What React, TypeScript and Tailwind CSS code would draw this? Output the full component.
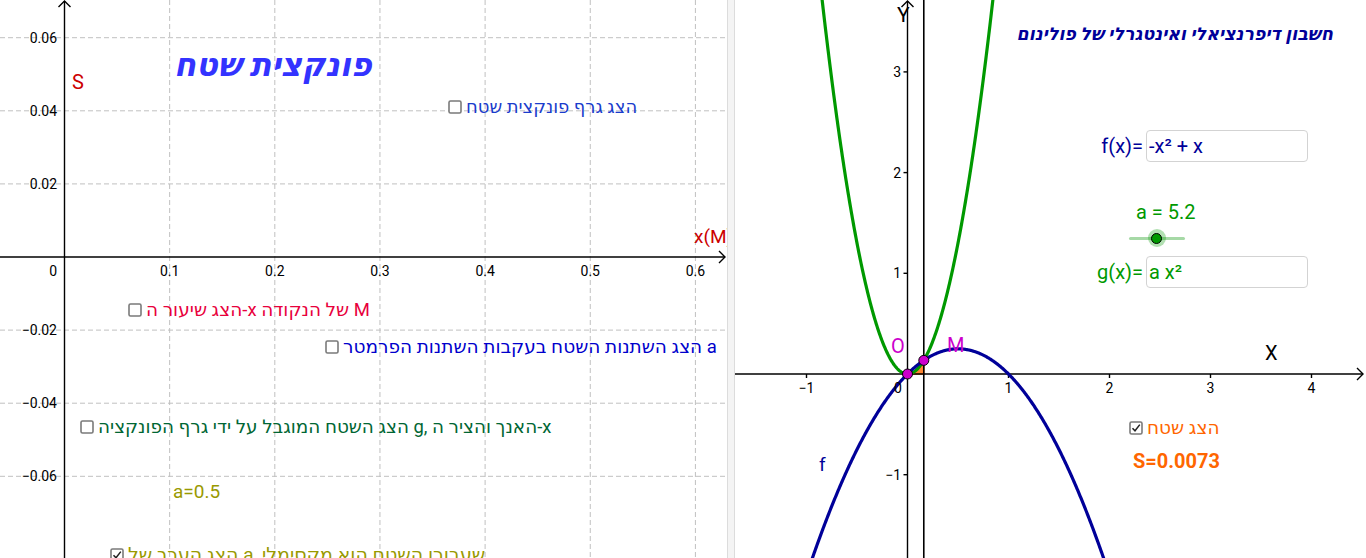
import React from 'react';

const FONT = "Roboto, 'DejaVu Sans', 'Liberation Sans', sans-serif";

// right view: world -> page pixels
const RX = (x: number) => 907.5 + 101 * x;
const RY = (y: number) => 374 - 100.7 * y;

const f = (x: number) => -x * x + x;
const a = 5.2;
const g = (x: number) => a * x * x;
const mx = 1 / (1 + a);

function curve(fn: (x: number) => number, from: number, to: number) {
    const pts: string[] = [];
    for (let x = from; x <= to + 1e-9; x += 0.005) {
        pts.push(`${RX(x).toFixed(2)},${RY(fn(x)).toFixed(2)}`);
    }
    return 'M' + pts.join(' L');
}

function areaPath() {
    const pts: string[] = [`${RX(0)},${RY(0)}`];
    for (let x = 0; x <= mx; x += mx / 20) {
        pts.push(`${RX(x).toFixed(2)},${RY(g(x)).toFixed(2)}`);
    }
    pts.push(`${RX(mx).toFixed(2)},${RY(0)}`);
    return 'M' + pts.join(' L') + ' Z';
}

function Box({ checked = false }: { checked?: boolean }) {
    return (
        <svg width="14" height="14" viewBox="0 0 14 14" className="shrink-0">
            <rect x="1" y="1" width="12" height="12" rx="1.5" fill="white" stroke="#7a7a7a" strokeWidth="1.6" />
            {checked && <path d="M3.5 7.2 L6 9.8 L10.8 3.6" fill="none" stroke="#222" strokeWidth="1.5" />}
        </svg>
    );
}

function LeftView() {
    const xs = [1, 2, 3, 4, 5, 6].map((k) => 64.5 + k * 105.15);
    const ys = [-3, -2, -1, 1, 2, 3, 4].map((k) => 257 - k * 73.1);
    const yLabels: [number, string][] = [
        [3, '0.06'],
        [2, '0.04'],
        [1, '0.02'],
        [-1, '\u22120.02'],
        [-2, '\u22120.04'],
        [-3, '\u22120.06'],
    ];
    return (
        <svg width="727" height="558" className="absolute inset-0" fontFamily={FONT}>
            <g stroke="#c0c0c0" strokeWidth="1" strokeDasharray="5 3">
                {xs.map((x) => (
                    <line key={x} x1={x} y1="0" x2={x} y2="558" />
                ))}
                {ys.map((y) => (
                    <line key={y} x1="0" y1={y} x2="727" y2={y} />
                ))}
            </g>
            <g stroke="#000" strokeWidth="1.4" fill="none">
                <line x1="64.5" y1="1" x2="64.5" y2="558" />
                <line x1="0" y1="257" x2="725" y2="257" />
                <path d="M58.5 7 L64.5 1 L70.5 7" />
                <path d="M719 251 L725 257 L719 263" />
            </g>
            <g fontSize="14" fill="#000">
                {xs.map((x, i) => (
                    <text key={x} x={x} y="276" textAnchor="middle">
                        0.{i + 1}
                    </text>
                ))}
                <text x="57" y="276" textAnchor="end">0</text>
                {yLabels.map(([k, t]) => (
                    <text key={k} x="57" y={257 - k * 73.1 + 5} textAnchor="end">
                        {t}
                    </text>
                ))}
            </g>
        </svg>
    );
}

function RightView() {
    const xt = [-1, 1, 2, 3, 4];
    const yt = [-1, 1, 2, 3];
    return (
        <svg width="631" height="558" className="absolute inset-0" fontFamily={FONT}>
            <g transform="translate(-735 0)">
                <path d={areaPath()} fill="#ff6600" fillOpacity="0.8" stroke="#ff6600" strokeWidth="1.5" />
                <g stroke="#000" strokeWidth="1.4" fill="none">
                    <line x1="907.5" y1="1" x2="907.5" y2="558" />
                    <line x1="735" y1="374" x2="1363" y2="374" />
                    <path d="M901.5 7 L907.5 1 L913.5 7" />
                    <path d="M1357 368 L1363 374 L1357 380" />
                    {xt.map((k) => (
                        <line key={k} x1={RX(k)} y1="374" x2={RX(k)} y2="378" />
                    ))}
                    {yt.map((k) => (
                        <line key={k} x1="903.5" y1={RY(k)} x2="907.5" y2={RY(k)} />
                    ))}
                </g>
                <line x1={RX(mx)} y1="0" x2={RX(mx)} y2="558" stroke="#000" strokeWidth="1.6" />
                <path d={curve(g, -0.9, 0.9)} fill="none" stroke="#009900" strokeWidth="3.2" />
                <path d={curve(f, -1.05, 2.05)} fill="none" stroke="#000099" strokeWidth="3.2" />
                <g fontSize="14" fill="#000">
                    {xt.map((k) => (
                        <text key={k} x={RX(k)} y="393" textAnchor="middle">
                            {k < 0 ? '\u22121' : k}
                        </text>
                    ))}
                    <text x="898" y="393" textAnchor="middle">0</text>
                    {yt.map((k) => (
                        <text key={k} x="901" y={RY(k) + 5} textAnchor="end">
                            {k < 0 ? '\u22121' : k}
                        </text>
                    ))}
                </g>
                <circle cx={RX(0)} cy={RY(0)} r="5" fill="#cc00cc" stroke="#000" strokeWidth="1" />
                <circle cx={RX(mx)} cy={RY(f(mx))} r="5" fill="#cc00cc" stroke="#000" strokeWidth="1" />
            </g>
        </svg>
    );
}

function Slider() {
    return (
        <div className="relative w-[56px] h-[20px] flex items-center">
            <div className="w-full h-[3px] rounded-full bg-[#a6d9a6]" />
            <div className="absolute left-[19px] w-[18px] h-[18px] rounded-full bg-[#009900]/30 flex items-center justify-center">
                <div className="w-[11px] h-[11px] rounded-full bg-[#009900] border border-black" />
            </div>
        </div>
    );
}

export default function App() {
    return (
        <div className="w-[1366px] h-[558px] flex overflow-hidden bg-white" style={{ fontFamily: FONT }}>
            {/* Graphics view 2: area function */}
            <div className="relative w-[727px] h-full shrink-0 overflow-hidden">
                <LeftView />
                <div dir="rtl" className="absolute left-[174px] top-[49px] text-[32px] leading-none font-bold italic text-[#3333ff] whitespace-nowrap">
                    פונקצית שטח
                </div>
                <div className="absolute left-[72px] top-[72px] text-[20px] leading-none text-[#cc0000]">S</div>
                <div className="absolute left-[694px] top-[227px] text-[19px] leading-none text-[#cc0000] whitespace-nowrap">x(M)</div>

                <div className="absolute left-[448px] top-[98px] flex items-center gap-[4px] whitespace-nowrap">
                    <Box />
                    <span dir="ltr" className="text-[18px] leading-none text-[#1a3ccc]">הצג גרף פונקצית שטח</span>
                </div>
                <div className="absolute left-[128px] top-[301px] flex items-center gap-[4px] whitespace-nowrap">
                    <Box />
                    <span dir="ltr" className="text-[18.5px] leading-none text-[#e8003c]">הצג שיעור ה-x של הנקודה M</span>
                </div>
                <div className="absolute left-[325px] top-[338px] flex items-center gap-[4px] whitespace-nowrap">
                    <Box />
                    <span dir="ltr" className="text-[18.5px] leading-none text-[#0000cc]">הצג השתנות השטח בעקבות השתנות הפרמטר a</span>
                </div>
                <div className="absolute left-[80px] top-[418px] flex items-center gap-[4px] whitespace-nowrap">
                    <Box />
                    <span dir="ltr" className="text-[18.4px] leading-none text-[#006633]">הצג השטח המוגבל על ידי גרף הפונקציה g, האנך והציר ה-x</span>
                </div>
                <div className="absolute left-[173px] top-[482px] text-[19px] leading-none text-[#999900]">a=0.5</div>
                <div className="absolute left-[110px] top-[545px] flex items-center gap-[4px] whitespace-nowrap">
                    <Box checked />
                    <span dir="ltr" className="text-[19px] leading-none text-[#999900]">הצג הערך של a, שעבורו השטח הוא מקסימלי</span>
                </div>
            </div>

            {/* splitter */}
            <div className="w-[8px] h-full shrink-0 bg-[#f4f4f4] border-x border-[#dcdcdc]" />

            {/* Graphics view 1: functions */}
            <div className="relative flex-1 h-full overflow-hidden">
                <RightView />
                <div className="absolute left-[162px] top-[5px] text-[21px] leading-none text-black">Y</div>
                <div dir="rtl" className="absolute right-[33px] top-[26px] text-[17.5px] leading-none font-bold italic text-[#000099] whitespace-nowrap">
                    חשבון דיפרנציאלי ואינטגרלי של פולינום
                </div>

                {/* input boxes and slider */}
                <div className="absolute left-[363px] top-[130px] w-[210px] flex flex-col items-end">
                    <div className="flex items-center gap-[3px]">
                        <span className="text-[20px] leading-none text-[#000099]">f(x)=</span>
                        <div className="w-[162px] h-[32px] rounded-[4px] border border-[#d3d3d3] bg-white flex items-center px-[2px] text-[20px] text-[#000099]">
                            -x² + x
                        </div>
                    </div>
                    <div className="self-start ml-[20px] mt-[40px] flex flex-col items-center gap-[6px]">
                        <span className="text-[20px] leading-none text-[#009900] whitespace-nowrap ml-[18px]">a = 5.2</span>
                        <Slider />
                    </div>
                    <div className="mt-[8px] flex items-center gap-[3px]">
                        <span className="text-[20px] leading-none text-[#009900]">g(x)=</span>
                        <div className="w-[162px] h-[32px] rounded-[4px] border border-[#d3d3d3] bg-white flex items-center px-[2px] text-[20px] text-[#009900]">
                            a x²
                        </div>
                    </div>
                </div>

                <div className="absolute left-[156px] top-[336px] text-[20px] leading-none text-[#cc00cc]">O</div>
                <div className="absolute left-[212px] top-[335px] text-[20px] leading-none text-[#cc00cc]">M</div>
                <div className="absolute left-[530px] top-[343px] text-[20px] leading-none text-black">X</div>
                <div className="absolute left-[84px] top-[455px] text-[19px] leading-none text-[#000099]">f</div>

                <div className="absolute left-[394px] top-[419px] flex items-center gap-[4px] whitespace-nowrap">
                    <Box checked />
                    <span className="text-[18.5px] leading-none text-[#ff6600]">הצג שטח</span>
                </div>
                <div className="absolute left-[398px] top-[451px] text-[20px] leading-none font-bold text-[#ff6600]">S=0.0073</div>
            </div>
        </div>
    );
}
